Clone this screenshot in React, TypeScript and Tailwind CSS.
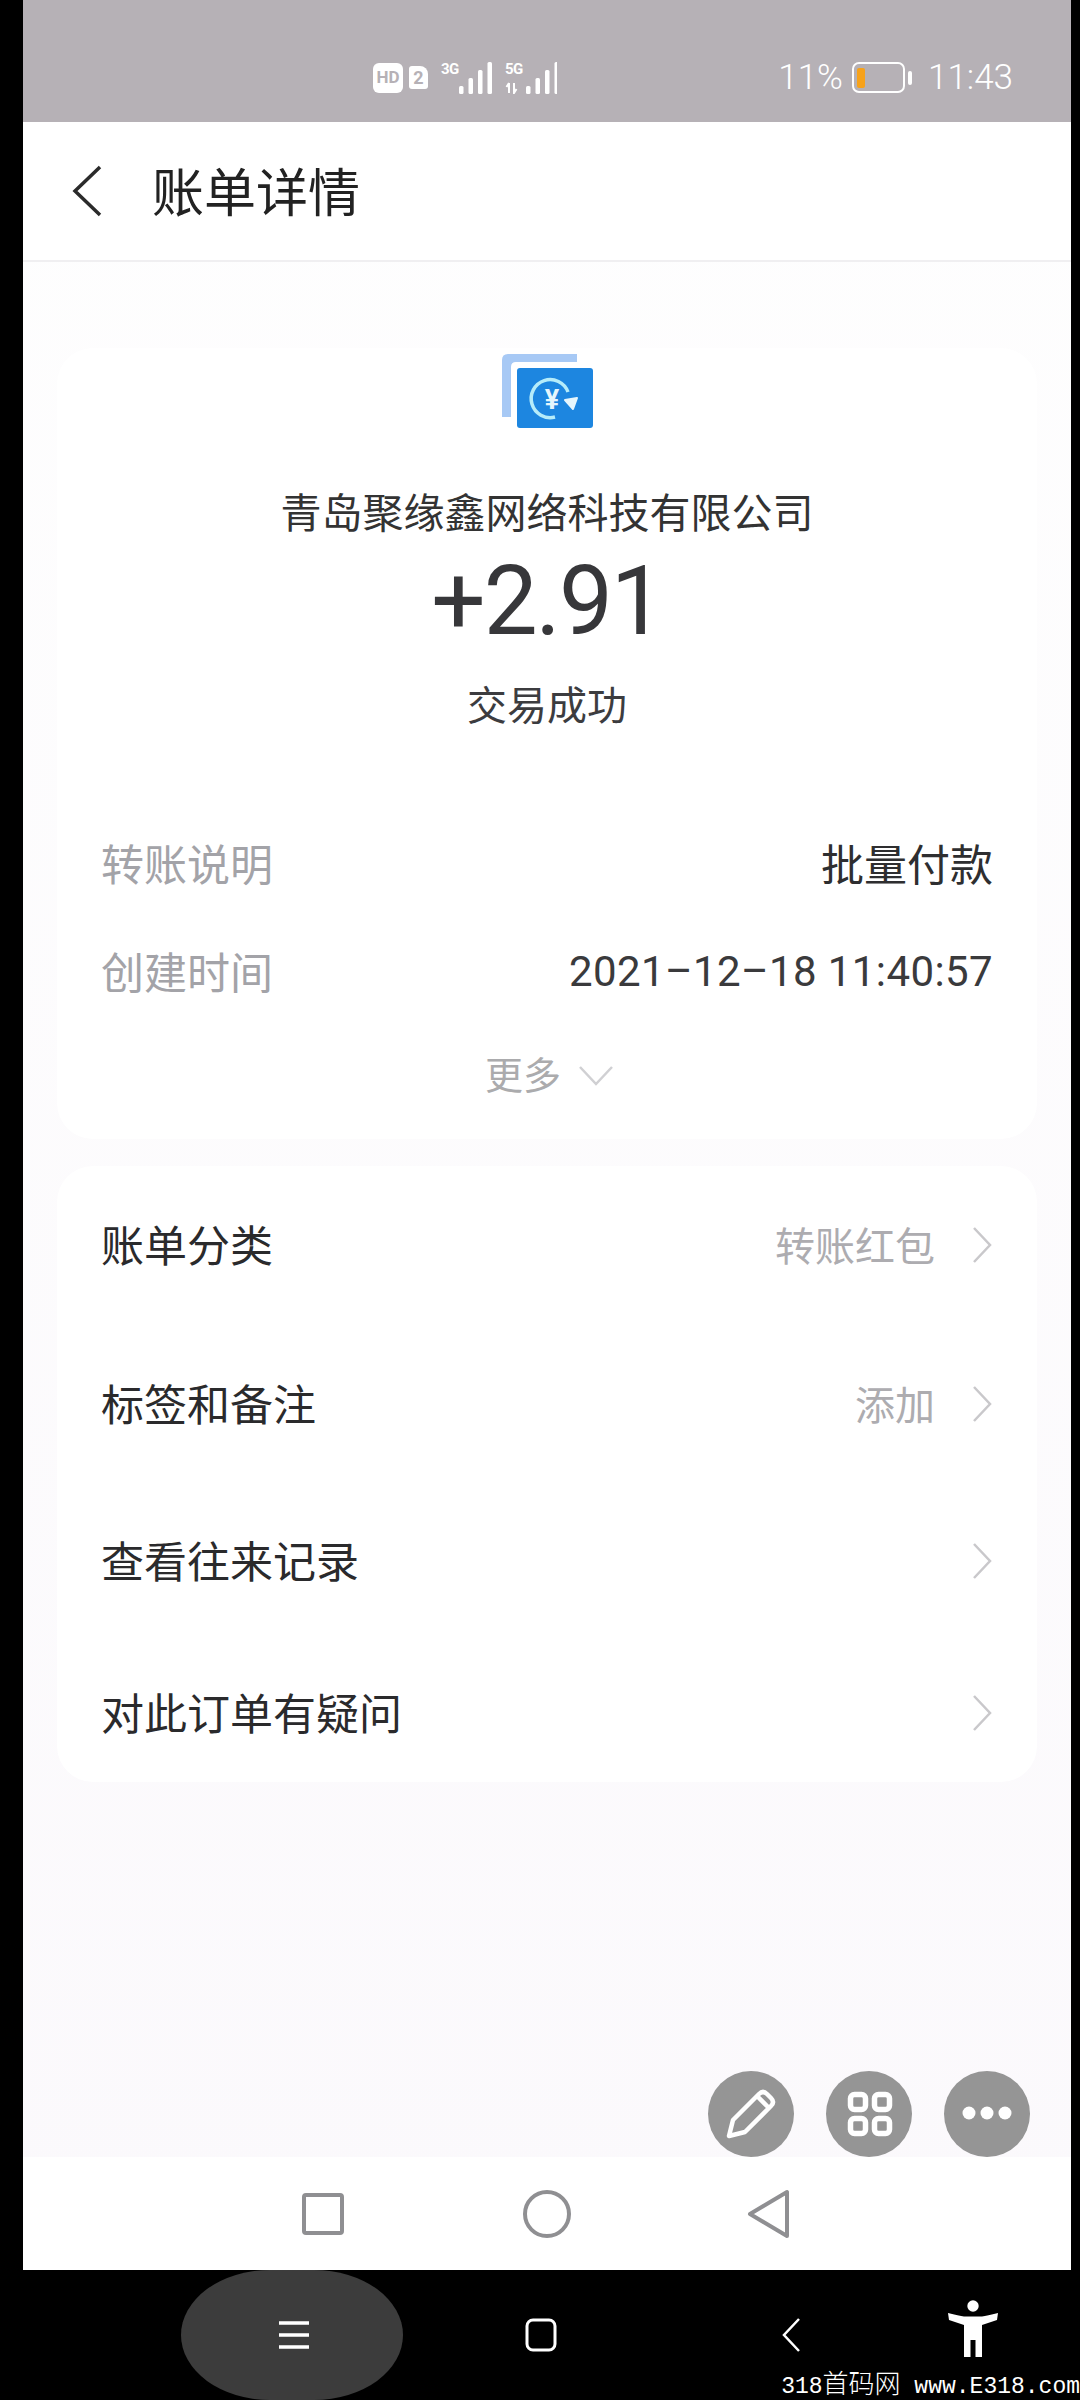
const cjk = "font-['Noto_Sans_CJK_SC',sans-serif]";

function Chevron() {
  return (
    <svg width="22" height="38" viewBox="0 0 22 38" fill="none" className="ml-[36px] mt-[3px]">
      <path d="M3 2 L19 19 L3 36" stroke="#c9c8cb" strokeWidth="2.5" />
    </svg>
  );
}

function SignalBars({ x }: { x: number }) {
  return (
    <>
      {[0, 1, 2, 3].map((i) => (
        <rect key={i} x={x + i * 9.5} y={24 - i * 8} width="4.5" height={8 + i * 8} rx="1.5" fill="#fff" />
      ))}
    </>
  );
}

function StatusBar() {
  return (
    <div className="flex h-[122px] items-center justify-between bg-[#b6b1b6] pl-[350px] pr-[58px] pt-[33px] text-white">
      <div className="flex items-center">
        <div className="flex h-[30px] w-[30px] items-center justify-center rounded-[6px] bg-white font-['Roboto',sans-serif] text-[17px] font-bold text-[#b6b1b6]">
          HD
        </div>
        <div className="ml-[6px] flex h-[23px] w-[19px] items-center justify-center rounded-[3px] rounded-tr-[8px] bg-white font-['Roboto',sans-serif] text-[18px] font-bold text-[#b6b1b6]">
          2
        </div>
        <div className="relative ml-[13px] h-[32px] w-[52px]">
          <span className="absolute left-0 top-[-4px] font-['Roboto',sans-serif] text-[15px] font-bold tracking-[-0.5px]">3G</span>
          <svg width="52" height="32" viewBox="0 0 52 32">
            <SignalBars x={18} />
          </svg>
        </div>
        <div className="relative ml-[12px] h-[32px] w-[52px]">
          <span className="absolute left-0 top-[-4px] font-['Roboto',sans-serif] text-[15px] font-bold tracking-[-0.5px]">5G</span>
          <svg width="52" height="32" viewBox="0 0 52 32">
            <path d="M4 21 V31 M1.5 25 L4 21 M9 21 V31 L11.5 27" stroke="#fff" strokeWidth="2" fill="none" />
            <SignalBars x={21} />
          </svg>
        </div>
      </div>
      <div className="flex items-center font-['Roboto',sans-serif] text-[35px] font-light leading-none">
        <span>11%</span>
        <div className="ml-[9px] flex h-[31px] w-[53px] items-center rounded-[7px] border-[2.5px] border-white px-[3px]">
          <div className="h-[20px] w-[8px] rounded-[2px] bg-[#f7a21b]" />
        </div>
        <div className="ml-[3px] h-[14px] w-[4px] rounded-[2px] bg-white" />
        <span className="ml-[16px]">11:43</span>
      </div>
    </div>
  );
}

function Header() {
  return (
    <div className="flex h-[140px] items-center border-b-2 border-[#f0eff1] bg-white pl-[48px]">
      <svg width="32" height="52" viewBox="0 0 32 52" fill="none">
        <path d="M29 2 L4 26 L29 50" stroke="#2b2b2b" strokeWidth="3.5" />
      </svg>
      <h1 className={`${cjk} ml-[49px] pb-[3px] text-[52px] font-normal leading-none text-[#222]`}>账单详情</h1>
    </div>
  );
}

function TransferIcon() {
  return (
    <svg width="92" height="76" viewBox="0 0 92 76">
      <path d="M6 0 H75 V8 H14 Q9 8 9 13 V63 H0 V6 Q0 0 6 0 Z" fill="#a7c9f5" />
      <rect x="15" y="14" width="76" height="60" rx="3" fill="#1d86e0" />
      <path d="M53 63 A19 19 0 1 1 66 38" stroke="#b5ecfa" strokeWidth="3.5" fill="none" />
      <path d="M63 46 L75 44 L71 55 Z" fill="#e6f6fd" strokeLinejoin="round" stroke="#e6f6fd" strokeWidth="2" />
      <text x="50" y="55" textAnchor="middle" fontSize="27" fontWeight="700" fill="#e6f6fd" fontFamily="Roboto, sans-serif">
        ¥
      </text>
    </svg>
  );
}

function InfoRow({ label, value, className, valueClass }: { label: string; value: string; className: string; valueClass: string }) {
  return (
    <div className={`flex items-center justify-between leading-[60px] ${className}`}>
      <span className={`${cjk} text-[43px] text-[#a3a3a8]`}>{label}</span>
      <span className={valueClass}>{value}</span>
    </div>
  );
}

function SummaryCard() {
  return (
    <section className="mx-[34px] mt-[86px] h-[791px] rounded-[36px] bg-white px-[44px] pt-[6px]">
      <div className="flex h-[77px] justify-center pl-[2px]">
        <TransferIcon />
      </div>
      <p className={`${cjk} mt-[49px] text-center text-[41px] leading-[60px] text-[#333]`}>青岛聚缘鑫网络科技有限公司</p>
      <p className="mt-[5px] text-center font-['Roboto',sans-serif] text-[96px] leading-[112px] tracking-[-2px] text-[#37373a]">+2.91</p>
      <p className={`${cjk} mt-[16px] text-center text-[40px] leading-[60px] text-[#3c3c3f]`}>交易成功</p>
      <InfoRow
        label="转账说明"
        value="批量付款"
        className="mt-[99px]"
        valueClass={`${cjk} text-[43px] text-[#2e2e30]`}
      />
      <InfoRow
        label="创建时间"
        value="2021–12–18 11:40:57"
        className="mt-[46px]"
        valueClass="pt-[4px] font-['Roboto',sans-serif] text-[42px] tracking-[0.4px] text-[#3a3a3c]"
      />
      <div className="mt-[41px] flex items-center justify-center pl-[5px] leading-[60px]">
        <span className={`${cjk} text-[38px] text-[#ababad]`}>更多</span>
        <svg width="36" height="22" viewBox="0 0 36 22" fill="none" className="ml-[17px] mt-[3px]">
          <path d="M2 3 L18 20 L34 3" stroke="#d0d0d3" strokeWidth="2.5" />
        </svg>
      </div>
    </section>
  );
}

const actions = [
  { label: "账单分类", value: "转账红包", height: "h-[155px]" },
  { label: "标签和备注", value: "添加", height: "h-[163px]" },
  { label: "查看往来记录", value: "", height: "h-[151px]" },
  { label: "对此订单有疑问", value: "", height: "h-[147px] pt-[5px]" },
];

function ActionsCard() {
  return (
    <section className="mx-[34px] mt-[27px] rounded-[36px] bg-white px-[44px]">
      {actions.map((item) => (
        <div key={item.label} className={`flex items-center justify-between ${item.height}`}>
          <span className={`${cjk} text-[43px] text-[#2a2a2c]`}>{item.label}</span>
          <div className="flex items-center">
            {item.value && <span className={`${cjk} text-[40px] text-[#adacb0]`}>{item.value}</span>}
            <Chevron />
          </div>
        </div>
      ))}
    </section>
  );
}

function FloatingButtons() {
  return (
    <div className="absolute bottom-0 right-[41px] flex gap-[32px]">
      <button className="h-[86px] w-[86px] rounded-full bg-[#959595]">
        <svg width="86" height="86" viewBox="0 0 86 86" fill="none">
          <path
            d="M21 65 L25 49 L51 23 Q55 19 59 23 L63 27 Q67 31 63 35 L37 61 Z M50 26 L60 36"
            stroke="#fff"
            strokeWidth="4.5"
            strokeLinejoin="round"
          />
        </svg>
      </button>
      <button className="h-[86px] w-[86px] rounded-full bg-[#959595]">
        <svg width="86" height="86" viewBox="0 0 86 86" fill="none" stroke="#fff" strokeWidth="5.5">
          <rect x="24.5" y="23.5" width="15" height="15" rx="4" />
          <rect x="48.5" y="23.5" width="15" height="15" rx="4" />
          <rect x="24.5" y="47.5" width="15" height="15" rx="4" />
          <rect x="48.5" y="47.5" width="15" height="15" rx="4" />
        </svg>
      </button>
      <button className="h-[86px] w-[86px] rounded-full bg-[#959595]">
        <svg width="86" height="86" viewBox="0 0 86 86" fill="#fff">
          <circle cx="25" cy="42" r="6.5" />
          <circle cx="43" cy="42" r="6.5" />
          <circle cx="61" cy="42" r="6.5" />
        </svg>
      </button>
    </div>
  );
}

function AppNav() {
  return (
    <div className="flex h-[113px] items-center bg-white pl-[278px]">
      <svg width="44" height="46" viewBox="0 0 44 46" fill="none" stroke="#8f8f92" strokeWidth="4">
        <rect x="3" y="4" width="38" height="38" rx="2" />
      </svg>
      <svg width="50" height="50" viewBox="0 0 50 50" fill="none" stroke="#8f8f92" strokeWidth="4" className="ml-[177px]">
        <circle cx="25" cy="25" r="22" />
      </svg>
      <svg width="44" height="50" viewBox="0 0 44 50" fill="none" stroke="#8f8f92" strokeWidth="4" className="ml-[175px]">
        <path d="M40 3 V47 L3 25 Z" strokeLinejoin="round" />
      </svg>
    </div>
  );
}

function SystemNav() {
  return (
    <div className="relative flex h-[130px] items-center bg-black">
      <div className="ml-[181px] flex h-[130px] w-[222px] items-center justify-center rounded-[40%/50%] bg-[#3c3c3c] pl-[4px]">
        <svg width="32" height="30" viewBox="0 0 32 30" stroke="#fff" strokeWidth="3.5">
          <path d="M1 3 H31 M1 15 H31 M1 27 H31" />
        </svg>
      </div>
      <svg width="32" height="34" viewBox="0 0 32 34" fill="none" stroke="#fff" strokeWidth="3" className="ml-[122px]">
        <rect x="2" y="2" width="28" height="30" rx="6" />
      </svg>
      <svg width="20" height="34" viewBox="0 0 20 34" fill="none" stroke="#fff" strokeWidth="2.5" className="ml-[224px]">
        <path d="M18 1 L3 17 L18 33" />
      </svg>
      <svg width="52" height="58" viewBox="0 0 52 58" fill="#fff" className="ml-[146px] mb-[12px]">
        <circle cx="26" cy="6" r="5.7" />
        <path d="M1 13 Q12 15.5 17 16.5 H35 Q40 15.5 51 13 L50 20 L35 25 V57 H28.5 V40 H23.5 V57 H17 V25 L2 20 Z" />
      </svg>
      <div className="absolute bottom-0 right-0 whitespace-nowrap font-['Liberation_Mono','Noto_Sans_CJK_SC',monospace] text-[23px] leading-[26px] text-white">
        318<span className={`${cjk} text-[26px] font-light leading-[26px]`}>首码网</span> www.E318.com
      </div>
    </div>
  );
}

export default function App() {
  return (
    <div className="h-[2400px] w-[1080px] overflow-hidden bg-black">
      <div className="ml-[23px] flex h-[2270px] w-[1048px] flex-col bg-linear-to-b from-[#fefefe] to-[#fbf9fc]">
        <StatusBar />
        <Header />
        <main className="relative flex-1">
          <SummaryCard />
          <ActionsCard />
          <FloatingButtons />
        </main>
        <AppNav />
      </div>
      <SystemNav />
    </div>
  );
}
